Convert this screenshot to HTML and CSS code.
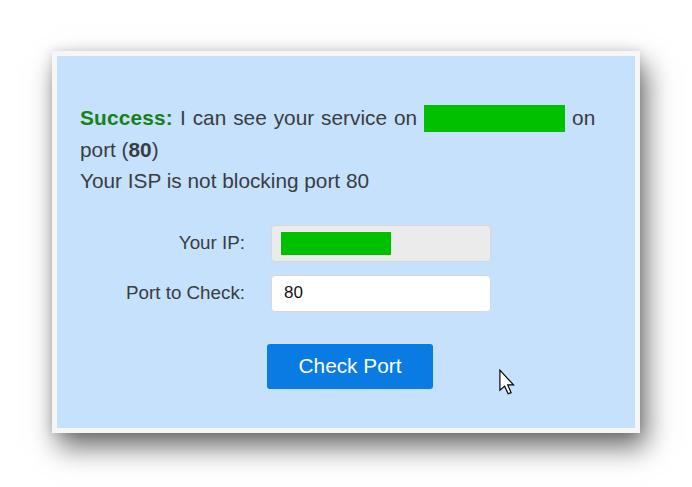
FILE: index.html
```html
<!DOCTYPE html>
<html>
<head>
<meta charset="utf-8">
<link rel="stylesheet" href="styles.css">
</head>
<body>
<div class="frame">
  <div class="panel">
    <p class="message"><span class="first"><span class="success">Success:</span> I can see your service on <span class="redact redact-big"></span> on</span> port (<b>80</b>)<br>Your ISP is not blocking port 80</p>
    <div class="form">
      <div class="row">
        <label class="label">Your IP:</label>
        <div class="input readonly"><span class="redact redact-small"></span></div>
      </div>
      <div class="row">
        <label class="label">Port to Check:</label>
        <div class="input">80</div>
      </div>
      <div class="actions">
        <button class="btn">Check Port</button>
      </div>
    </div>
    <svg class="cursor" width="18" height="26" viewBox="0 0 14 22"><path d="M1 1 L1 18 L5 14.5 L8 21 L10.5 20 L7.6 13.5 L12.5 13.5 Z" fill="#fff" stroke="#000" stroke-width="1" stroke-linejoin="miter"/></svg>
  </div>
</div>
</body>
</html>
```
FILE: styles.css
```css
html, body {
  margin: 0;
  padding: 0;
  background: #ffffff;
}
body {
  width: 692px;
  height: 487px;
  overflow: hidden;
  font-family: "Liberation Sans", Arial, sans-serif;
}
.frame {
  margin: 51px 0 0 52px;
  width: 588px;
  height: 382px;
  box-sizing: border-box;
  padding: 5px;
  background: #f6f6f6;
  box-shadow: 6px 14px 26px rgba(0, 0, 0, 0.58), 0 0 10px rgba(0, 0, 0, 0.12);
}
.panel {
  position: relative;
  height: 100%;
  box-sizing: border-box;
  background: #c5e1fb;
  padding: 46px 23px 0 23px;
  color: #383d42;
}
.message {
  margin: 0;
  font-size: 20.8px;
  line-height: 31.5px;
}
.first {
  word-spacing: 1.2px;
}
.success {
  color: #17801a;
  font-weight: bold;
  letter-spacing: 0.2px;
}
.message b {
  font-weight: bold;
}
.redact {
  display: inline-block;
  background: #00c000;
}
.redact-big {
  width: 141px;
  height: 27px;
  vertical-align: -7px;
}
.redact-small {
  width: 110px;
  height: 23px;
}
.form {
  margin-top: 28px;
  display: flex;
  flex-direction: column;
  gap: 13px;
}
.row {
  display: flex;
  align-items: center;
  gap: 26px;
}
.label {
  width: 165px;
  text-align: right;
  font-size: 18.8px;
}
.input {
  width: 220px;
  height: 37px;
  box-sizing: border-box;
  border: 1px solid #d4d8dc;
  border-radius: 4px;
  background: #ffffff;
  display: flex;
  align-items: center;
  padding-left: 12px;
  font-size: 17px;
  color: #111;
}
.input.readonly {
  background: #ebebeb;
  padding-left: 9px;
}
.actions {
  margin-top: 19px;
  padding-left: 187px;
  display: flex;
}
.btn {
  width: 166px;
  height: 45px;
  border: none;
  border-radius: 3px;
  background: #0b7be4;
  color: #ffffff;
  font-family: "Liberation Sans", Arial, sans-serif;
  font-size: 20.8px;
  padding: 0;
}
.cursor {
  position: absolute;
  left: 441px;
  top: 313px;
}
```
